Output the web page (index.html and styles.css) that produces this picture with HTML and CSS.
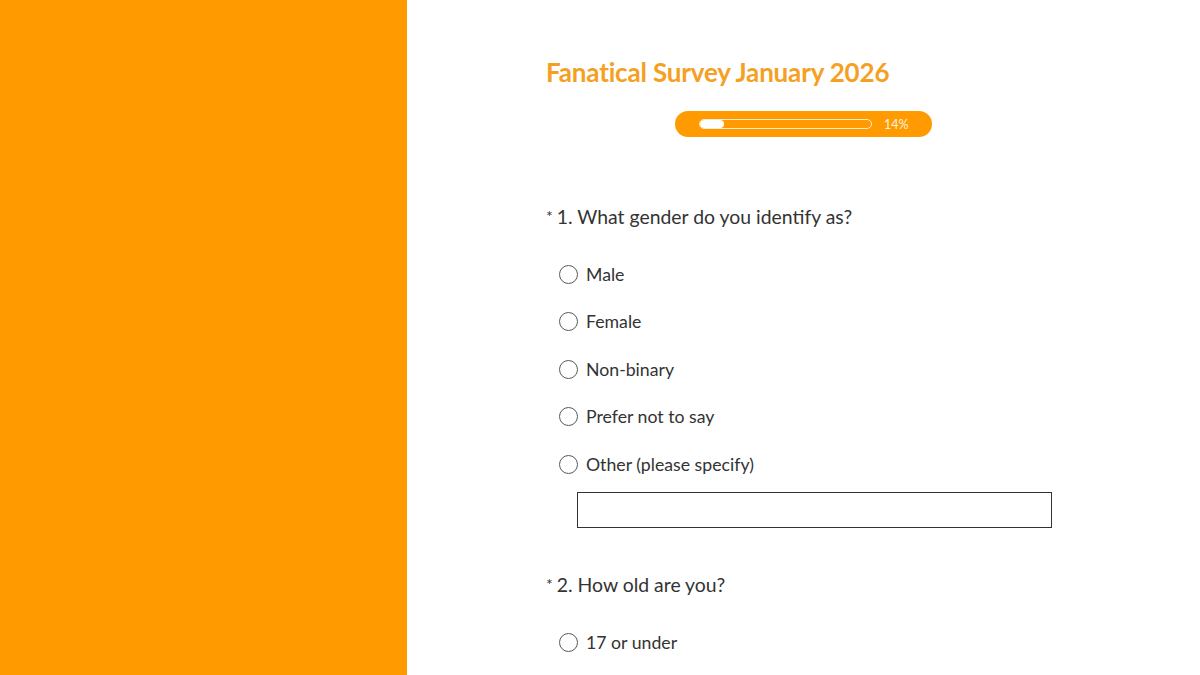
FILE: index.html
```html
<!DOCTYPE html>
<html>
<head>
<meta charset="utf-8">
<link rel="stylesheet" href="styles.css">
</head>
<body>
<div class="page">
  <aside class="side"></aside>
  <main class="main">
    <h1 class="title">Fanatical Survey January 2026</h1>
    <div class="progress-row">
      <div class="progress">
        <div class="track"><div class="fill" style="width:14%"></div></div>
        <span class="pct">14%</span>
      </div>
    </div>
    <section class="question q1">
      <h2 class="qtitle"><span class="req">*</span> 1. What gender do you identify as?</h2>
      <ul class="options">
        <li class="opt"><span class="radio"></span><span class="label">Male</span></li>
        <li class="opt"><span class="radio"></span><span class="label">Female</span></li>
        <li class="opt"><span class="radio"></span><span class="label">Non-binary</span></li>
        <li class="opt"><span class="radio"></span><span class="label">Prefer not to say</span></li>
        <li class="opt"><span class="radio"></span><span class="label">Other (please specify)</span></li>
      </ul>
      <div class="other-box"></div>
    </section>
    <section class="question q2">
      <h2 class="qtitle"><span class="req">*</span> 2. How old are you?</h2>
      <ul class="options">
        <li class="opt"><span class="radio"></span><span class="label">17 or under</span></li>
      </ul>
    </section>
  </main>
</div>
</body>
</html>
```
FILE: styles.css
```css
html, body {
  margin: 0;
  padding: 0;
  background: #ffffff;
  overflow: hidden;
}
body {
  font-family: Lato, "Open Sans", sans-serif;
  color: #333333;
}
.page {
  display: flex;
  width: 1200px;
  height: 675px;
}
.side {
  width: 407px;
  flex: none;
  background: #ff9b00;
}
.main {
  flex: 1;
  padding: 55px 0 0 139px;
}
.title {
  margin: 0;
  font-size: 26px;
  font-weight: 700;
  color: #f5a023;
  letter-spacing: -0.17px;
  line-height: 34px;
}
.progress-row {
  margin: 22px 0 0 129px;
}
.progress {
  width: 257px;
  height: 26px;
  border-radius: 13px;
  background: #ff9b00;
  display: flex;
  align-items: center;
  box-sizing: border-box;
  padding: 0 0 0 24px;
}
.track {
  width: 173px;
  height: 10px;
  box-sizing: border-box;
  border: 1px solid #ffe9c8;
  border-radius: 5px;
  overflow: hidden;
}
.fill {
  height: 100%;
  background: #ffffff;
  border-radius: 4px;
}
.pct {
  margin-left: 12px;
  font-size: 12.5px;
  color: #fff3e0;
}
.q1 {
  margin-top: 65px;
}
.q2 {
  margin-top: 42px;
}
.qtitle {
  margin: 0;
  font-size: 19.4px;
  font-weight: 400;
  color: #333333;
  line-height: 28px;
}
.req {
  font-size: 16px;
  vertical-align: 2px;
  margin-right: -1px;
}
.options {
  list-style: none;
  margin: 29px 0 0 13px;
  padding: 0;
  display: flex;
  flex-direction: column;
  gap: 19.5px;
}
.opt {
  display: flex;
  align-items: center;
  height: 28px;
}
.radio {
  width: 17px;
  height: 17px;
  border: 1.5px solid #5a5a5a;
  border-radius: 50%;
  flex: none;
}
.label {
  margin-left: 8px;
  font-size: 17.7px;
  color: #333333;
}
.other-box {
  margin: 14px 0 0 31px;
  width: 475px;
  height: 36px;
  box-sizing: border-box;
  border: 1px solid #333;
}
```
